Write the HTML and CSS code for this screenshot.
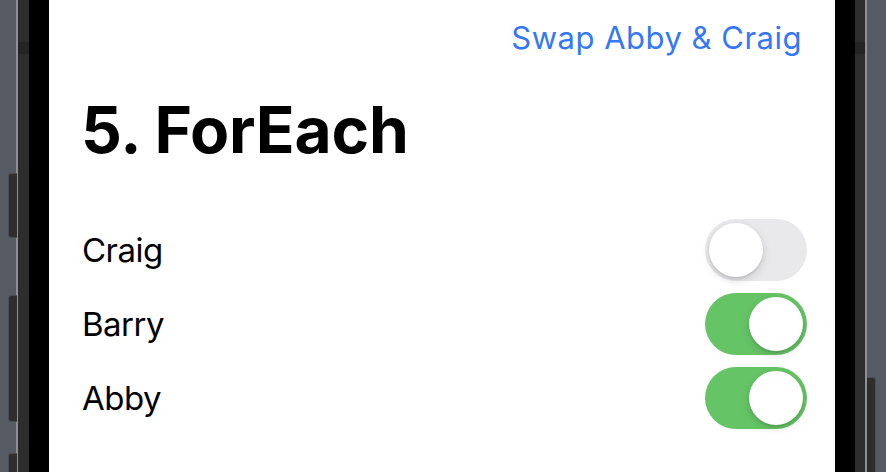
FILE: index.html
```html
<!DOCTYPE html>
<html>
<head>
<meta charset="utf-8">
<link rel="stylesheet" href="styles.css">
</head>
<body>
<div class="device">
  <div class="frame frame-left">
    <div class="outer outer-left">
      <span class="hw hw-1"></span>
      <span class="hw hw-2"></span>
      <span class="hw hw-3"></span>
    </div>
    <div class="rim"></div>
    <div class="band"><div class="band-stripe"></div></div>
    <div class="bezel"></div>
  </div>
  <main class="screen">
    <div class="nav">
      <span class="nav-button">Swap Abby &amp; Craig</span>
    </div>
    <h1 class="title">5. ForEach</h1>
    <ul class="list">
      <li class="row"><span class="label">Craig</span><span class="switch"><span class="knob"></span></span></li>
      <li class="row"><span class="label">Barry</span><span class="switch on"><span class="knob"></span></span></li>
      <li class="row"><span class="label">Abby</span><span class="switch on"><span class="knob"></span></span></li>
    </ul>
  </main>
  <div class="frame frame-right">
    <div class="bezel"></div>
    <div class="band band-right"><div class="band-stripe"></div></div>
    <div class="rim"></div>
    <div class="outer outer-right">
      <span class="hw hw-r"></span>
    </div>
  </div>
</div>
</body>
</html>
```
FILE: styles.css
```css
* { box-sizing: border-box; }
html, body {
  margin: 0;
  padding: 0;
  width: 886px;
  height: 472px;
  overflow: hidden;
  background: #565b63;
  font-family: "Inter", "Noto Sans", sans-serif;
}
.device {
  display: flex;
  height: 472px;
  overflow: hidden;
}
.frame {
  display: flex;
  height: 100%;
}
.outer {
  position: relative;
  background: #565b63;
  height: 100%;
}
.outer-left { width: 16px; }
.outer-right { width: 19px; }
.rim {
  width: 2px;
  background: #8c8f94;
}
.band {
  width: 11px;
  background: #2d2d2d;
  display: flex;
  flex-direction: column;
}
.band-right { width: 10px; }
.band-stripe {
  margin-top: 42px;
  height: 12px;
  background: #242424;
}
.bezel {
  width: 20px;
  background: #000;
}
.hw {
  position: absolute;
  background: #2e2e2e;
  border: 1px solid #4a4e55;
}
.hw-1 { left: 8px; width: 9px; top: 173px; height: 65px; border-right: none; border-radius: 3px 0 0 3px; }
.hw-2 { left: 8px; width: 9px; top: 295px; height: 127px; border-right: none; border-radius: 3px 0 0 3px; }
.hw-3 { left: 8px; width: 9px; top: 453px; height: 19px; border-right: none; border-bottom: none; border-radius: 3px 0 0 0; }
.hw-r { left: 0; width: 9px; top: 377px; height: 95px; border-left: none; border-bottom: none; border-radius: 0 3px 0 0; }

.screen {
  flex: 0 0 786px;
  background: #fff;
  padding: 0 28px 0 34px;
  display: flex;
  flex-direction: column;
}
.nav {
  display: flex;
  justify-content: flex-end;
  padding-top: 20px;
  padding-right: 5px;
}
.nav-button {
  color: #3478f6;
  font-size: 31px;
  line-height: 36px;
  letter-spacing: 0.5px;
}
.title {
  margin: 36px 0 0 -2px;
  font-size: 64px;
  line-height: 76px;
  font-weight: 700;
  color: #000;
  letter-spacing: -0.2px;
}
.list {
  list-style: none;
  margin: 45px 0 0 0;
  padding: 0;
}
.row {
  height: 74px;
  display: flex;
  align-items: center;
  justify-content: space-between;
}
.label {
  margin-left: -1px;
  font-size: 33px;
  line-height: 40px;
  letter-spacing: -0.5px;
  color: #000;
}
.switch {
  width: 102px;
  height: 62px;
  border-radius: 31px;
  background: #e9e9eb;
  padding: 4px;
  display: flex;
  justify-content: flex-start;
}
.switch.on {
  background: #65c466;
  justify-content: flex-end;
}
.knob {
  width: 54px;
  height: 54px;
  border-radius: 50%;
  background: #fff;
  box-shadow: 0 3px 8px rgba(0,0,0,0.15), 0 2px 2px rgba(0,0,0,0.08);
}
```
